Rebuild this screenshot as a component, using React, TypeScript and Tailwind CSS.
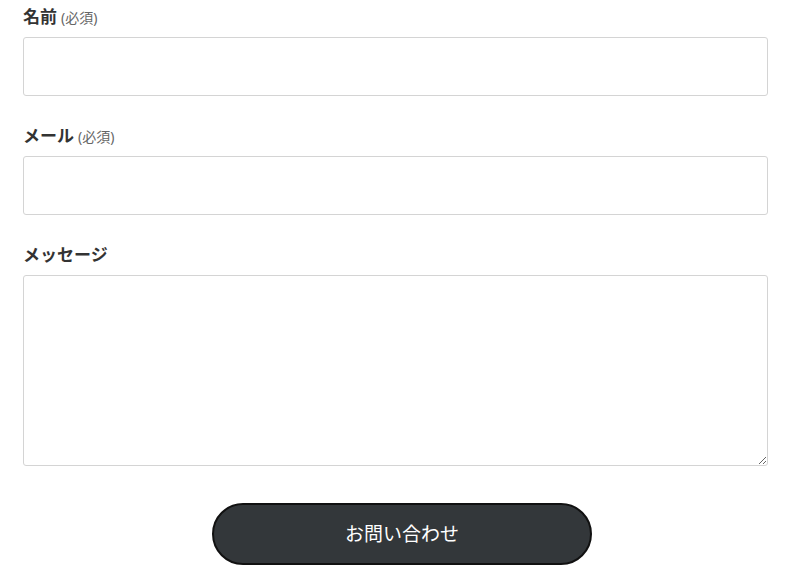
import { FC } from 'react';

const Label: FC<{ text: string; required?: boolean }> = ({ text, required }) => (
  <label className="block h-6 leading-6 mb-2 text-[17px] font-bold text-[#333]">
    {text}
    {required && <span className="ml-1 text-[14px] font-normal text-[#666]">(必須)</span>}
  </label>
);

const App: FC = () => {
  return (
    <div
      className="w-[800px] h-[580px] bg-white pl-[23px] pr-[32px] pt-[5px]"
      style={{ fontFamily: '"Noto Sans", "Noto Sans CJK JP", sans-serif' }}
    >
      <div className="mb-7">
        <Label text="名前" required />
        <input
          type="text"
          className="block w-full h-[59px] border border-[#d4d4d4] rounded-[3px] bg-white outline-none"
        />
      </div>
      <div className="mb-7">
        <Label text="メール" required />
        <input
          type="email"
          className="block w-full h-[59px] border border-[#d4d4d4] rounded-[3px] bg-white outline-none"
        />
      </div>
      <div className="mb-[37px]">
        <Label text="メッセージ" />
        <textarea className="block w-full h-[191px] border border-[#d4d4d4] rounded-[3px] bg-white outline-none" />
      </div>
      <div className="flex justify-center">
        <button
          type="button"
          className="w-[380px] h-[62px] rounded-full border-2 border-[#111] bg-[#33373a] text-white text-[19px] ml-[13px]"
        >
          お問い合わせ
        </button>
      </div>
    </div>
  );
};

export default App;
